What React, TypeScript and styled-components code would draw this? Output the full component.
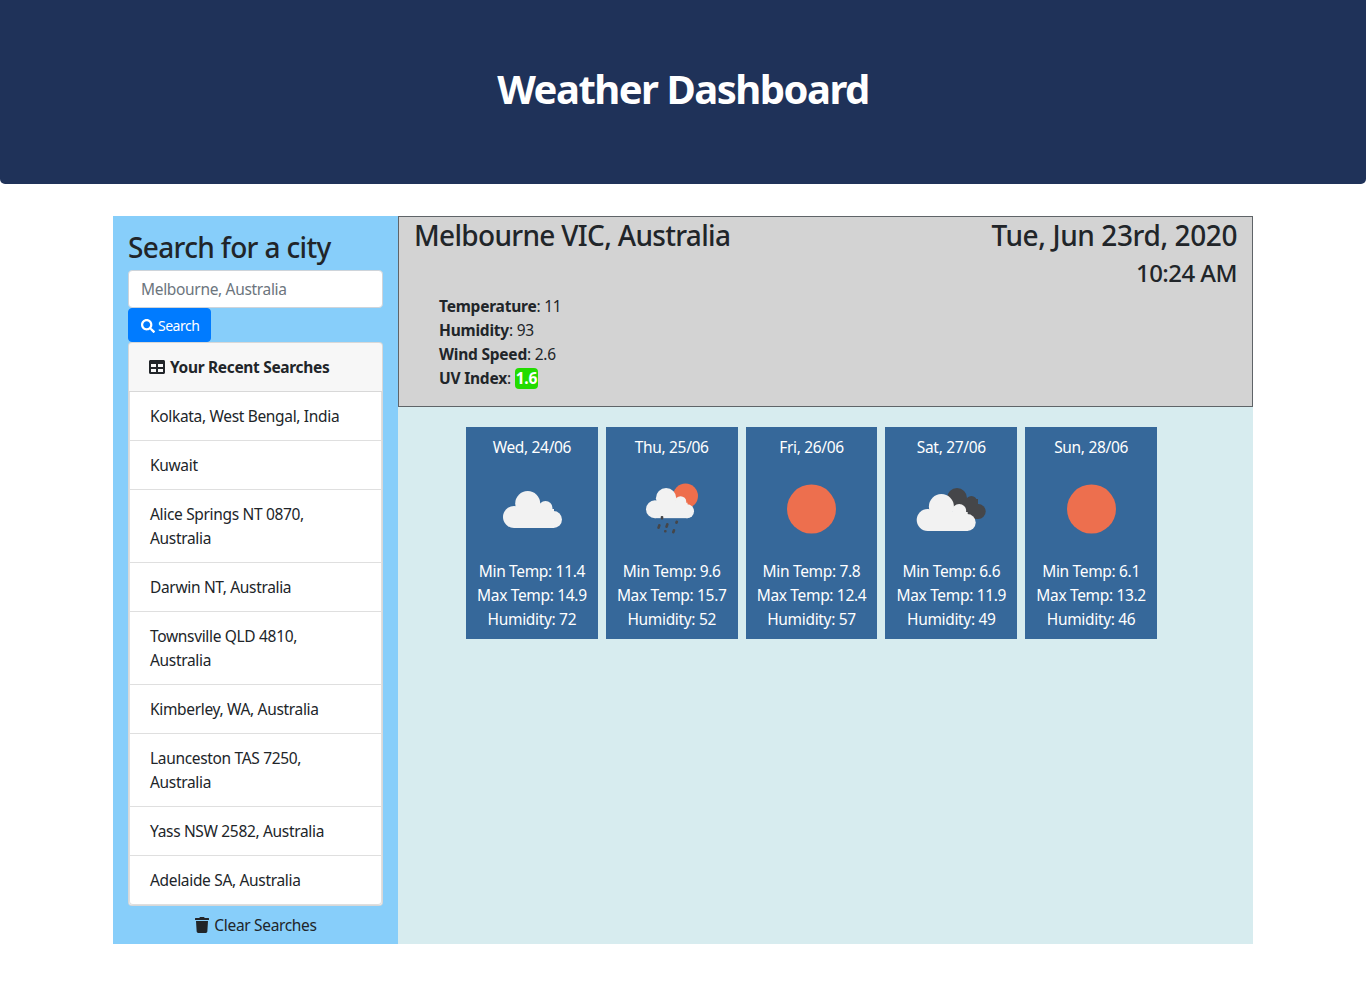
import styled, { createGlobalStyle } from "styled-components"
import { FaSearch, FaTable, FaTrash } from "react-icons/fa"

const GlobalStyle = createGlobalStyle`
	* {
		box-sizing: border-box;
	}

	body {
		margin: 0;
		background: #fff;
		color: #212529;
		font-family: "Noto Sans", "Open Sans", sans-serif;
		font-size: 15.5px;
		line-height: 24px;
		letter-spacing: -0.33px;
	}
`

const Hero = styled.header`
	display: flex;
	justify-content: center;
	align-items: center;
	height: 184px;
	margin-bottom: 32px;
	padding-bottom: 6px;
	background: #1f3259;
	border-radius: 0 0 5px 5px;
`

const HeroTitle = styled.h1`
	margin: 0;
	color: #fff;
	font-size: 40px;
	font-weight: 700;
	line-height: 48px;
	letter-spacing: -1.5px;
`

const Page = styled.div`
	display: flex;
	width: 1140px;
	height: 728px;
	margin: 0 auto;
`

const Sidebar = styled.aside`
	display: flex;
	flex-direction: column;
	width: 285px;
	padding: 0 15px;
	background: #87cefa;
`

const SideTitle = styled.h3`
	margin: 14px 0 6px;
	font-size: 28px;
	font-weight: 500;
	line-height: 34px;
	letter-spacing: -0.65px;
`

const CityInput = styled.input`
	display: block;
	width: 100%;
	height: 38px;
	padding: 6px 12px;
	background: #fff;
	border: 1px solid #ced4da;
	border-radius: 4px;
	color: #495057;
	font: inherit;
	letter-spacing: inherit;

	&::placeholder {
		color: #6c757d;
		opacity: 1;
	}
`

const SearchButton = styled.button`
	display: flex;
	align-items: center;
	gap: 3px;
	align-self: flex-start;
	height: 34px;
	padding: 1px 11px 0 12px;
	background: #007bff;
	border: 1px solid #007bff;
	border-radius: 4px;
	color: #fff;
	font: inherit;
	font-size: 14px;
	letter-spacing: -0.5px;
`

const RecentCard = styled.section`
	background: #f7f7f7;
	border: 1px solid rgba(0, 0, 0, 0.125);
	border-radius: 4px;
`

const RecentHeader = styled.div`
	display: flex;
	align-items: center;
	gap: 5px;
	height: 49px;
	padding: 0 20px;
	border-bottom: 1px solid rgba(0, 0, 0, 0.125);
	font-weight: 700;
`

const RecentList = styled.ul`
	margin: 0;
	padding: 0;
	list-style: none;
	background: #fff;
	border-radius: 0 0 4px 4px;
`

const RecentItem = styled.li`
	padding: 12px 20px;
	border: solid rgba(0, 0, 0, 0.125);
	border-width: 0 1px 1px;

	&:last-child {
		border-radius: 0 0 4px 4px;
	}
`

const ClearRow = styled.div`
	display: flex;
	justify-content: center;
	align-items: center;
	gap: 4px;
	margin-top: 7px;
`

const Main = styled.main`
	flex: 1;
	background: #d7ecef;
`

const Today = styled.section`
	height: 191px;
	padding: 0 15px;
	background: #d3d3d3;
	border: 1px solid #5f6468;
`

const TodayRow = styled.div`
	display: flex;
	justify-content: space-between;
	align-items: flex-start;
`

const TodayTitle = styled.h3`
	margin: 0;
	font-size: 28px;
	font-weight: 500;
	line-height: 36px;
	letter-spacing: -0.68px;
`

const TodayDate = styled(TodayTitle)`
	letter-spacing: -0.4px;
`

const TodayTime = styled.h4`
	margin: 2px 0 0;
	font-size: 24px;
	font-weight: 500;
	line-height: 36px;
	text-align: right;
	letter-spacing: -0.55px;
`

const Stats = styled.div`
	margin-top: 3px;
	padding-left: 25px;
`

const Stat = styled.div`
	line-height: 24px;
	letter-spacing: -0.22px;

	b {
		font-weight: 700;
	}
`

const UvBadge = styled.span`
	display: inline-block;
	padding: 0 1px;
	background: #22dc00;
	border-radius: 4px;
	color: #fff;
	font-weight: 700;
	line-height: 21px;
`

const Forecast = styled.div`
	display: grid;
	grid-template-columns: repeat(5, 131.8px);
	gap: 8px;
	margin-top: 20px;
	padding-left: 68px;
`

const DayCard = styled.article`
	height: 212px;
	padding: 8px 0;
	background: #36689a;
	color: #fff;
	text-align: center;
`

const DayIcon = styled.svg`
	display: block;
	width: 100px;
	height: 100px;
	margin: 0 auto;
`

// the lobes of the white cloud, drawn for a box 21-80 wide, 32-69 high
const CloudShape = ({ transform }: { transform?: string }) => (
	<g fill="#f2f2f2" transform={transform}>
		<circle cx="32" cy="58" r="11" />
		<circle cx="45.7" cy="44.5" r="12.5" />
		<circle cx="63.5" cy="49" r="7" />
		<circle cx="71.5" cy="60.5" r="8.5" />
		<rect x="32" y="50" width="40" height="19" />
	</g>
)

const CloudIcon = () => (
	<DayIcon viewBox="0 0 100 100">
		<CloudShape />
	</DayIcon>
)

const RainIcon = () => (
	<DayIcon viewBox="0 0 100 100">
		<circle cx="63.5" cy="37" r="12.5" fill="#ee6e4c" />
		<CloudShape transform="translate(6.9 3) scale(0.814)" />
		<g fill="#454649">
			<rect x="38.7" y="57" width="2.6" height="3.5" rx="1" />
			<rect x="35.8" y="65" width="2.6" height="5" rx="1" transform="rotate(18 37 67)" />
			<rect x="43.8" y="64" width="2.6" height="5" rx="1" transform="rotate(18 45 66)" />
			<rect x="53.4" y="61.5" width="2.6" height="3.5" rx="1" transform="rotate(18 54.7 63)" />
			<rect x="42" y="71" width="2.6" height="2.6" rx="1" />
			<rect x="50.4" y="70" width="2.6" height="4.5" rx="1" transform="rotate(18 51.7 72)" />
		</g>
	</DayIcon>
)

const SunIcon = () => (
	<DayIcon viewBox="0 0 100 100">
		<circle cx="50.5" cy="50" r="24.5" fill="#ed6f4e" />
	</DayIcon>
)

const DarkCloudIcon = () => (
	<DayIcon viewBox="0 0 100 100">
		<g fill="#454649">
			<circle cx="56" cy="39" r="10" />
			<circle cx="70.4" cy="42.5" r="5.5" />
			<circle cx="77.2" cy="52.5" r="7.5" />
			<rect x="52" y="40" width="25" height="20" />
		</g>
		<CloudShape transform="translate(-5.3 3)" />
	</DayIcon>
)

const days = [
	{ date: "Wed, 24/06", Icon: CloudIcon, min: "11.4", max: "14.9", humidity: 72 },
	{ date: "Thu, 25/06", Icon: RainIcon, min: "9.6", max: "15.7", humidity: 52 },
	{ date: "Fri, 26/06", Icon: SunIcon, min: "7.8", max: "12.4", humidity: 57 },
	{ date: "Sat, 27/06", Icon: DarkCloudIcon, min: "6.6", max: "11.9", humidity: 49 },
	{ date: "Sun, 28/06", Icon: SunIcon, min: "6.1", max: "13.2", humidity: 46 },
]

const recent = [
	"Kolkata, West Bengal, India",
	"Kuwait",
	"Alice Springs NT 0870, Australia",
	"Darwin NT, Australia",
	"Townsville QLD 4810, Australia",
	"Kimberley, WA, Australia",
	"Launceston TAS 7250, Australia",
	"Yass NSW 2582, Australia",
	"Adelaide SA, Australia",
]

export default function App() {
	return (
		<>
			<GlobalStyle />
			<Hero>
				<HeroTitle>Weather Dashboard</HeroTitle>
			</Hero>
			<Page>
				<Sidebar>
					<SideTitle>Search for a city</SideTitle>
					<CityInput placeholder="Melbourne, Australia" />
					<SearchButton>
						<FaSearch size={14} />
						Search
					</SearchButton>
					<RecentCard>
						<RecentHeader>
							<FaTable size={16} />
							Your Recent Searches
						</RecentHeader>
						<RecentList>
							{recent.map((city) => (
								<RecentItem key={city}>{city}</RecentItem>
							))}
						</RecentList>
					</RecentCard>
					<ClearRow>
						<FaTrash size={16} />
						Clear Searches
					</ClearRow>
				</Sidebar>
				<Main>
					<Today>
						<TodayRow>
							<TodayTitle>Melbourne VIC, Australia</TodayTitle>
							<div>
								<TodayDate>Tue, Jun 23rd, 2020</TodayDate>
								<TodayTime>10:24 AM</TodayTime>
							</div>
						</TodayRow>
						<Stats>
							<Stat>
								<b>Temperature</b>: 11
							</Stat>
							<Stat>
								<b>Humidity</b>: 93
							</Stat>
							<Stat>
								<b>Wind Speed</b>: 2.6
							</Stat>
							<Stat>
								<b>UV Index</b>: <UvBadge>1.6</UvBadge>
							</Stat>
						</Stats>
					</Today>
					<Forecast>
						{days.map(({ date, Icon, min, max, humidity }) => (
							<DayCard key={date}>
								<div>{date}</div>
								<Icon />
								<div>Min Temp: {min}</div>
								<div>Max Temp: {max}</div>
								<div>Humidity: {humidity}</div>
							</DayCard>
						))}
					</Forecast>
				</Main>
			</Page>
		</>
	)
}
